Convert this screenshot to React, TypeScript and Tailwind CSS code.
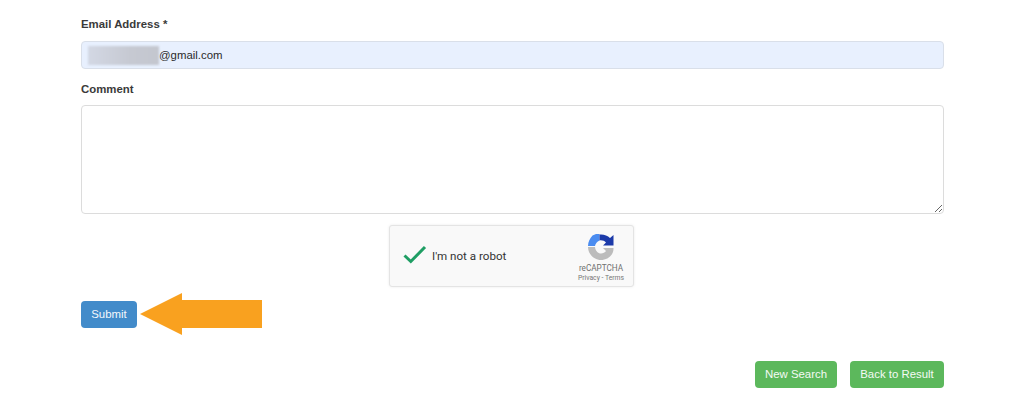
import React from 'react';

const font = "font-['Liberation_Sans',Arial,sans-serif]";

function RecaptchaLogo() {
    return (
        <svg width="26" height="26" viewBox="0 0 26 26" className="block">
            {/* grey lower arc */}
            <path d="M0 13 L7 13 C7.5 17 10 19.5 13 19.5 C15 19.5 17 18.5 18 17 L15 14 L25.5 14 C26 21 19.5 26 13 26 C6 26 0 20 0 13 Z" fill="#bcbcbc" />
            {/* blue left arc */}
            <path d="M0 12 C0 8 2 4 4.5 1.5 L8 0 L11.5 0 L11.5 6.5 C9 7.5 7.5 9.5 7 12 Z" fill="#4a8cf0" />
            {/* dark blue right arc */}
            <path d="M11.5 0.5 C15.5 0 19.5 1.5 22 4 L25.5 1 L25.5 11.5 L15 11.5 L18 8.5 C16.5 7 14 6 11.5 6.5 Z" fill="#1c3aa9" />
        </svg>
    );
}

function Recaptcha() {
    return (
        <div className="flex h-[62px] w-[245px] items-center rounded-[3px] border border-[#e4e4e4] bg-[#f9f9f9] shadow-[0_0_3px_rgba(0,0,0,0.08)]">
            <svg width="24" height="20" viewBox="0 0 24 20" className="ml-[13px] mb-[3px]">
                <path d="M1.5 10.5 L7.8 16.5 L22 2" fill="none" stroke="#1f9e64" strokeWidth="3" />
            </svg>
            <span className="ml-[5px] mt-[1px] font-['Roboto',sans-serif] text-[11.6px] text-[#333]">I'm not a robot</span>
            <div className="ml-auto mr-[9px] mt-[5px] flex w-[46px] flex-col items-center">
                <RecaptchaLogo />
                <span className="mt-[3px] font-['Roboto',sans-serif] text-[8.2px] leading-[10px] text-[#707070]">reCAPTCHA</span>
                <span className="font-['Roboto',sans-serif] text-[6.8px] leading-[10px] text-[#777] whitespace-nowrap">Privacy - Terms</span>
            </div>
        </div>
    );
}

export default function App() {
    return (
        <div className={`${font} h-[400px] w-[1024px] overflow-hidden bg-white pl-[81px] pt-[17px] text-[11.4px] text-[#3a3a3a]`}>
            <div className="w-[863px]">
                <label className="block font-bold leading-[14px]">Email Address *</label>
                <div className="mt-[10px] flex h-[28px] items-center rounded-[4px] border border-[#d9dfe9] bg-[#e8f0fe] pl-[6px] pt-[1px] text-[#2a2a2a]">
                    <span className="h-[19px] w-[71px] bg-[linear-gradient(90deg,#d3d8e4,#c6c9d2_60%,#c4c7cf)] blur-[1px]" />
                    <span>@gmail.com</span>
                </div>

                <label className="mt-[13px] block font-bold leading-[14px]">Comment</label>
                <textarea className="mt-[9px] block h-[109px] w-full rounded-[4px] border border-[#dcdcdc] bg-white" />

                <div className="mt-[11px] flex justify-center pr-[2px]">
                    <Recaptcha />
                </div>

                <div className="relative mt-[14px]">
                    <button className="h-[27px] w-[56px] rounded-[4px] bg-[#428bca] text-[#f4f8fc]">Submit</button>
                    {/* orange annotation arrow */}
                    <svg width="124" height="42" viewBox="0 0 124 42" className="absolute left-[59px] top-[-8px]">
                        <polygon points="0,21 42,0 42,7 122,7 122,35 42,35 42,42" fill="#f9a11f" />
                    </svg>
                </div>

                <div className="mt-[33px] flex justify-end gap-[13px]">
                    <button className="h-[27px] w-[82px] rounded-[4px] bg-[#5cb85c] text-[#f4faf4]">New Search</button>
                    <button className="h-[27px] w-[94px] rounded-[4px] bg-[#5cb85c] text-[#f4faf4]">Back to Result</button>
                </div>
            </div>
        </div>
    );
}
